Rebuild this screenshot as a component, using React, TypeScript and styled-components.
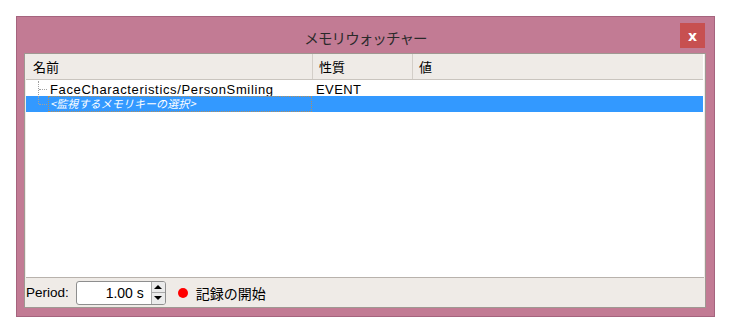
import { FC } from 'react';
import styled, { createGlobalStyle } from 'styled-components';

const GlobalStyle = createGlobalStyle`
  html, body {
    margin: 0;
    padding: 0;
    background: #ffffff;
  }
  body {
    font-family: 'Liberation Sans', 'Noto Sans CJK JP', sans-serif;
  }
`;

const frame = '#c27b94';
const panel = '#efebe7';
const uiFont = `'Liberation Sans', 'Noto Sans CJK JP', sans-serif`;

const Page = styled.div`
  width: 731px;
  height: 334px;
  padding: 16px 0 0 16px;
  box-sizing: border-box;
`;

const Window = styled.div`
  width: 699px;
  height: 301px;
  box-sizing: border-box;
  background: ${frame};
  border: 1px solid #a5647e;
  display: flex;
  flex-direction: column;
`;

const TitleBar = styled.div`
  height: 36px;
  display: flex;
  align-items: center;
  justify-content: center;
  position: relative;
`;

const Title = styled.span`
  font-family: 'Noto Sans CJK JP', sans-serif;
  font-size: 14.5px;
  letter-spacing: -0.9px;
  color: #2a2a2a;
  margin-top: 4px;
`;

const CloseButton = styled.div`
  position: absolute;
  right: 9px;
  top: 6px;
  width: 25px;
  height: 25px;
  background: #c75050;
  display: flex;
  align-items: center;
  justify-content: center;
  color: #ffffff;
  font-family: 'DejaVu Sans', sans-serif;
  font-weight: bold;
  font-size: 14px;
`;

const Client = styled.div`
  flex: 1;
  margin: 0 8px 8px 7px;
  border: 1px solid #9f9892;
  background: ${panel};
  display: flex;
  flex-direction: column;
`;

const ListView = styled.div`
  flex: 1;
  background: #ffffff;
  margin: 0 1px 0 1px;
  border-bottom: 1px solid #b8b2ac;
  display: flex;
  flex-direction: column;
`;

const Header = styled.div`
  height: 25px;
  display: grid;
  grid-template-columns: 286px 100px 1fr;
  background: ${panel};
  border-bottom: 1px solid #c9c4be;
  margin-right: 1px;
`;

const HeaderCell = styled.div<{ $divider?: boolean }>`
  display: flex;
  align-items: center;
  padding-left: ${({ $divider }) => ($divider ? '6px' : '7px')};
  border-left: ${({ $divider }) => ($divider ? '1px solid #d3cec8' : 'none')};
  font-family: 'Noto Sans CJK JP', sans-serif;
  font-size: 13px;
  color: #000;
`;

const Row = styled.div<{ $selected?: boolean }>`
  height: 16px;
  display: grid;
  grid-template-columns: 286px 100px 1fr;
  background: ${({ $selected }) => ($selected ? '#3399ff' : 'transparent')};
  color: ${({ $selected }) => ($selected ? '#ffffff' : '#000000')};
  font-family: ${uiFont};
  font-size: 13px;
  margin-right: 1px;
`;

const NameCell = styled.div`
  display: flex;
  align-items: center;
  padding-left: 12px;
`;

const TreeLine = styled.span<{ $last?: boolean }>`
  width: 9px;
  height: 16px;
  position: relative;
  flex-shrink: 0;
  &::before {
    content: '';
    position: absolute;
    left: 0;
    top: 0;
    height: ${({ $last }) => ($last ? '8px' : '16px')};
    border-left: 1px dotted #a0a0a0;
  }
  &::after {
    content: '';
    position: absolute;
    left: 1px;
    top: 8px;
    width: 8px;
    border-top: 1px dotted #a0a0a0;
  }
`;

const NameText = styled.span<{ $focus?: boolean }>`
  margin-left: ${({ $focus }) => ($focus ? '1px' : '3px')};
  padding-left: ${({ $focus }) => ($focus ? '1px' : '0')};
  height: 14px;
  line-height: ${({ $focus }) => ($focus ? '13px' : '16px')};
  flex: ${({ $focus }) => ($focus ? 1 : 'none')};
  border: ${({ $focus }) => ($focus ? '1px dotted #b09060' : 'none')};
  font-style: ${({ $focus }) => ($focus ? 'italic' : 'normal')};
  font-family: ${({ $focus }) => ($focus ? `'Noto Sans CJK JP', sans-serif` : uiFont)};
  font-size: ${({ $focus }) => ($focus ? '11px' : '13px')};
  letter-spacing: ${({ $focus }) => ($focus ? '0.1px' : '0.65px')};
  white-space: nowrap;
`;

const Cell = styled.div`
  display: flex;
  align-items: center;
  padding-left: 4px;
  padding-top: 2px;
  letter-spacing: 0.4px;
`;

const Toolbar = styled.div`
  height: 29px;
  display: flex;
  align-items: center;
  padding-left: 1px;
  font-family: ${uiFont};
  font-size: 13.5px;
  color: #000;
`;

const Label = styled.span`
  margin-right: 7px;
`;

const SpinBox = styled.div`
  display: flex;
  align-items: stretch;
  height: 22px;
  border: 1px solid #8e8e8e;
  border-radius: 3px;
  background: #ffffff;
  overflow: hidden;
`;

const SpinValue = styled.div`
  width: 74px;
  display: flex;
  align-items: center;
  justify-content: flex-end;
  padding-right: 7px;
  box-sizing: border-box;
  font-size: 14px;
`;

const SpinButtons = styled.div`
  width: 13px;
  display: flex;
  flex-direction: column;
  border-left: 1px solid #a8a8a8;
  background: #ebebeb;
`;

const SpinArrow = styled.div<{ $down?: boolean }>`
  flex: 1;
  display: flex;
  align-items: center;
  justify-content: center;
  border-top: ${({ $down }) => ($down ? '1px solid #a8a8a8' : 'none')};
  &::after {
    content: '';
    border-left: 4px solid transparent;
    border-right: 4px solid transparent;
    ${({ $down }) =>
      $down ? 'border-top: 4px solid #000;' : 'border-bottom: 4px solid #000;'}
  }
`;

const RecordDot = styled.span`
  width: 10px;
  height: 10px;
  border-radius: 50%;
  background: #ff0000;
  margin: 0 8px 0 12px;
`;

const RecordLabel = styled.span`
  font-family: 'Noto Sans CJK JP', sans-serif;
  font-size: 14px;
`;

const App: FC = () => {
  return (
    <Page>
      <GlobalStyle />
      <Window>
        <TitleBar>
          <Title>メモリウォッチャー</Title>
          <CloseButton>x</CloseButton>
        </TitleBar>
        <Client>
          <ListView>
            <Header>
              <HeaderCell>名前</HeaderCell>
              <HeaderCell $divider>性質</HeaderCell>
              <HeaderCell $divider>値</HeaderCell>
            </Header>
            <Row>
              <NameCell>
                <TreeLine />
                <NameText>FaceCharacteristics/PersonSmiling</NameText>
              </NameCell>
              <Cell>EVENT</Cell>
              <Cell />
            </Row>
            <Row $selected>
              <NameCell>
                <TreeLine $last />
                <NameText $focus>&lt;監視するメモリキーの選択&gt;</NameText>
              </NameCell>
              <Cell />
              <Cell />
            </Row>
          </ListView>
          <Toolbar>
            <Label>Period:</Label>
            <SpinBox>
              <SpinValue>1.00 s</SpinValue>
              <SpinButtons>
                <SpinArrow />
                <SpinArrow $down />
              </SpinButtons>
            </SpinBox>
            <RecordDot />
            <RecordLabel>記録の開始</RecordLabel>
          </Toolbar>
        </Client>
      </Window>
    </Page>
  );
};

export default App;
